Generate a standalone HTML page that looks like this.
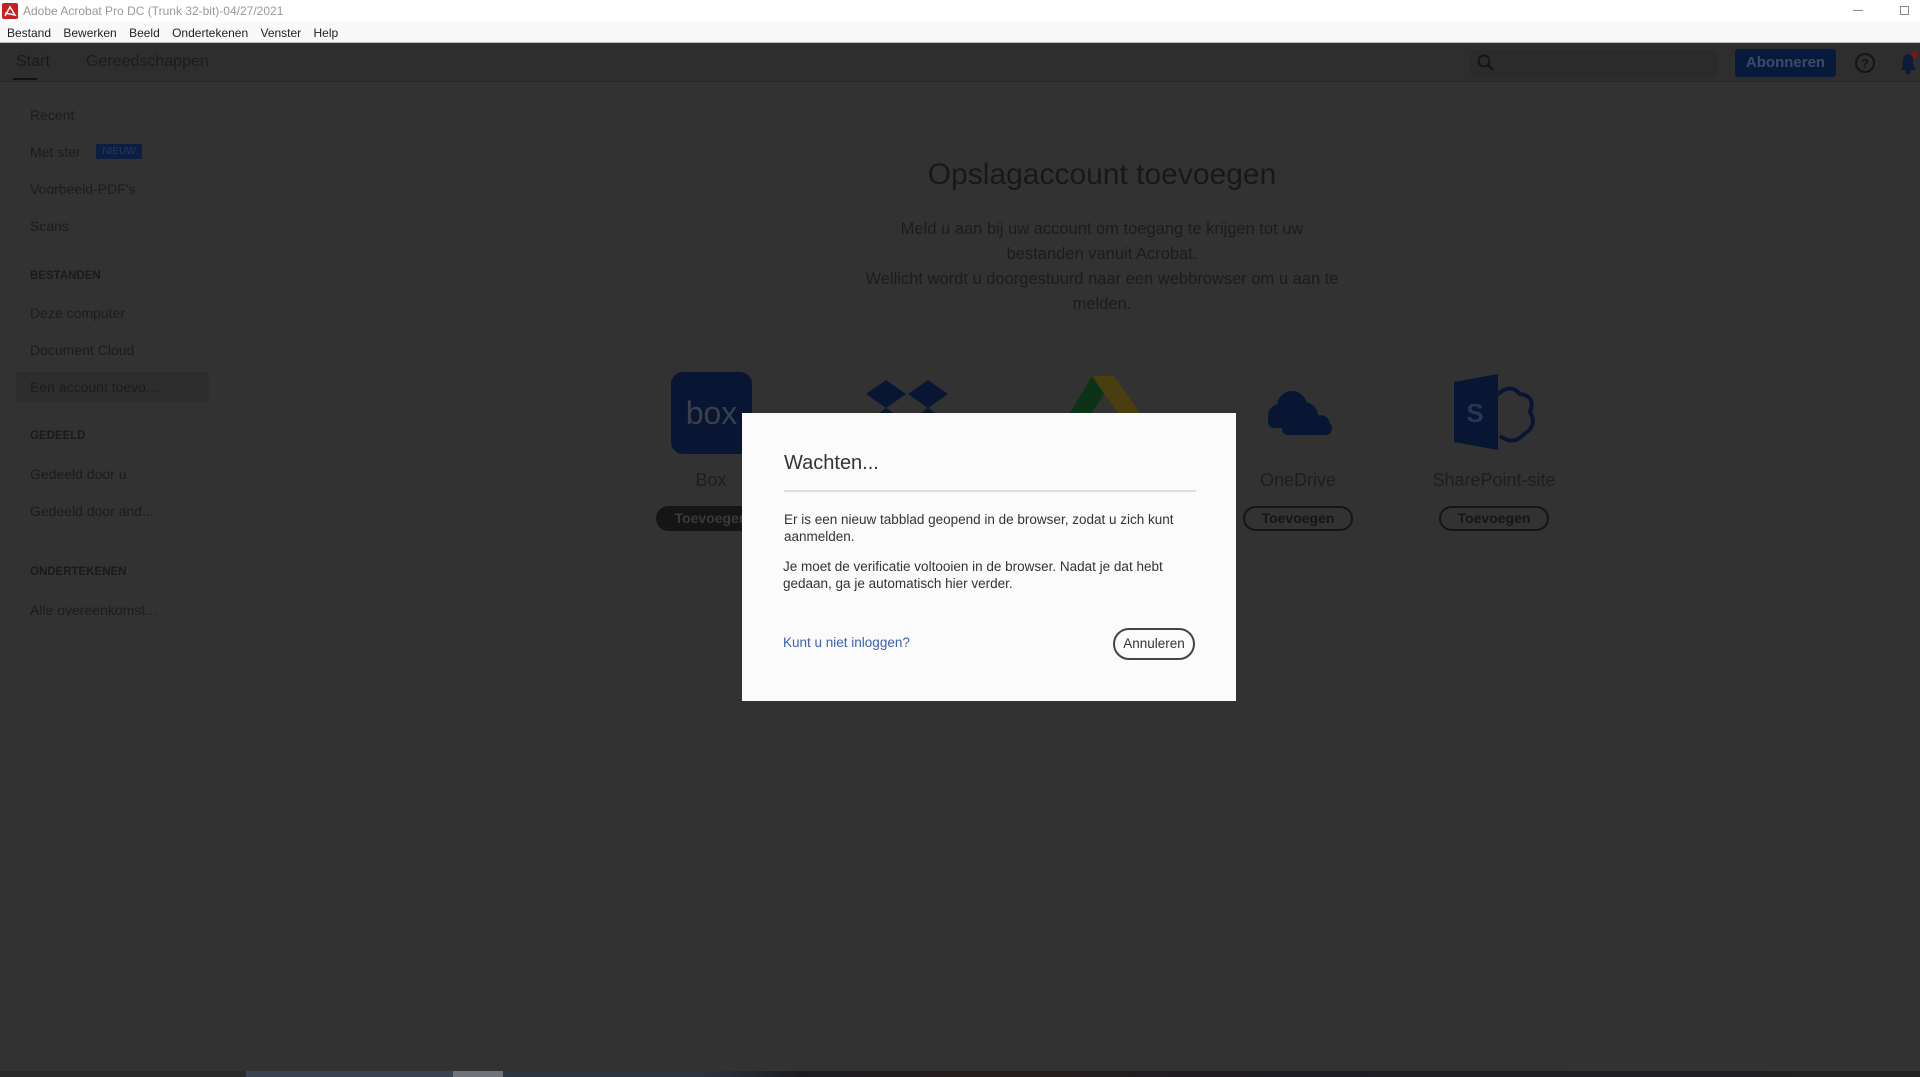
<!DOCTYPE html>
<html><head><meta charset="utf-8"><style>
*{margin:0;padding:0;box-sizing:border-box}
body{width:1920px;height:1077px;overflow:hidden;background:#323232;font-family:"Liberation Sans",sans-serif;position:relative}
.a{position:absolute;white-space:nowrap}
.side{font-size:14px;color:#1c1c1c;left:30px}
.hd{font-size:11.5px;font-weight:bold;color:#1a1a1a;left:30px}
.lbl{font-size:18px;color:#1e1e1e;text-align:center;width:200px}
.btn{border:2px solid #151515;border-radius:13px;height:25px;width:110px;font-size:14px;font-weight:bold;color:#151515;text-align:center;line-height:21px}
</style></head><body>
<div class="a" style="left:0;top:0;width:1920px;height:22px;background:#fff"></div>
<svg class="a" style="left:2px;top:3px" width="16" height="16"><rect width="16" height="16" rx="2" fill="#c8201e"/><path d="M3 13 L8 4 L13 12 L3 10" stroke="#fff" stroke-width="1.5" fill="none"/></svg>
<div class="a" style="left:23px;top:4px;font-size:12px;color:#999">Adobe Acrobat Pro DC (Trunk 32-bit)-04/27/2021</div>
<div class="a" style="left:1853px;top:10px;width:10px;height:1px;background:#888"></div>
<div class="a" style="left:1900px;top:6px;width:9px;height:9px;border:1px solid #888"></div>
<div class="a" style="left:0;top:22px;width:1920px;height:21px;background:#f9f9f9;border-bottom:1px solid #bbb"></div>
<div class="a" style="left:7px;top:26px;font-size:12px;color:#222;word-spacing:9px">Bestand Bewerken Beeld Ondertekenen Venster Help</div>
<div class="a" style="left:0;top:44px;width:1920px;height:38px;background:#2e2e2e;border-bottom:1px solid #282828"></div>
<div class="a" style="left:16px;top:53px;font-size:16px;color:#1a1a1a">Start</div>
<div class="a" style="left:13px;top:78px;width:24px;height:2px;background:#111"></div>
<div class="a" style="left:86px;top:53px;font-size:16px;color:#1c1c1c">Gereedschappen</div>
<div class="a" style="left:1471px;top:50px;width:246px;height:27px;background:#2b2b2b;border-radius:3px;border:1px solid #2a2a2a"></div>
<svg class="a" style="left:1476px;top:53px" width="20" height="20"><circle cx="8" cy="8" r="5.5" stroke="#151515" stroke-width="2" fill="none"/><path d="M12 12 L17 17" stroke="#151515" stroke-width="2.5"/></svg>
<div class="a" style="left:1735px;top:49px;width:101px;height:28px;background:#081a3c;border-radius:3px;color:#3c4a66;font-weight:bold;font-size:15px;text-align:center;line-height:28px">Abonneren</div>
<svg class="a" style="left:1854px;top:52px" width="22" height="22"><circle cx="11" cy="11" r="9" stroke="#151515" stroke-width="2" fill="none"/><text x="11" y="16" font-size="13" font-weight="bold" text-anchor="middle" fill="#151515" font-family="Liberation Sans">?</text></svg>
<svg class="a" style="left:1897px;top:50px" width="23" height="26"><path d="M4 20 Q6 17 6 11 Q6 5 11 4 Q16 5 16 11 Q16 17 19 20 Z" fill="#0a1a3a"/><circle cx="11" cy="22" r="2.5" fill="#0a1a3a"/><circle cx="18" cy="5" r="3" fill="#8a1010"/></svg>

<div class="a side" style="top:107px">Recent</div>
<div class="a side" style="top:144px">Met ster</div>
<div class="a" style="left:96px;top:144px;width:46px;height:15px;background:#0b1e44;color:#2a3a5a;font-size:10px;text-align:center;line-height:15px">NIEUW</div>
<div class="a side" style="top:181px">Voorbeeld-PDF's</div>
<div class="a side" style="top:218px">Scans</div>
<div class="a hd" style="top:270px">BESTANDEN</div>
<div class="a side" style="top:305px">Deze computer</div>
<div class="a side" style="top:342px">Document Cloud</div>
<div class="a" style="left:16px;top:372px;width:193px;height:30px;background:#2d2d2d"></div>
<div class="a side" style="top:379px">Een account toevo...</div>
<div class="a hd" style="top:430px">GEDEELD</div>
<div class="a side" style="top:466px">Gedeeld door u</div>
<div class="a side" style="top:503px">Gedeeld door and...</div>
<div class="a hd" style="top:566px">ONDERTEKENEN</div>
<div class="a side" style="top:602px">Alle overeenkomst...</div>

<div class="a" style="left:802px;top:158px;width:600px;text-align:center;font-size:30px;color:#181818">Opslagaccount toevoegen</div>
<div class="a" style="left:802px;top:217px;width:600px;text-align:center;font-size:16.5px;line-height:25px;color:#1c1c1c;white-space:normal">Meld u aan bij uw account om toegang te krijgen tot uw<br>bestanden vanuit Acrobat.<br>Wellicht wordt u doorgestuurd naar een webbrowser om u aan te<br>melden.</div>

<div class="a" style="left:671px;top:372px;width:81px;height:82px;background:#091633;border-radius:12px;color:#3a3f4a;font-size:32px;text-align:center;line-height:82px">box</div>
<svg class="a" style="left:866px;top:376px" width="84" height="80"><g fill="#091633"><path d="M0 18 L20 4 L40 18 L20 32Z"/><path d="M42 18 L62 4 L82 18 L62 32Z"/><path d="M0 46 L20 32 L40 46 L20 60Z"/><path d="M42 46 L62 32 L82 46 L62 60Z"/></g></svg>
<svg class="a" style="left:1062px;top:376px" width="84" height="40"><path d="M30 0 L52 0 L80 40 L58 40Z" fill="#4a3d10"/><path d="M30 0 L42 18 L28 40 L6 40Z" fill="#0c3218"/></svg>
<div class="a lbl" style="left:611px;top:470px">Box</div>
<div class="a btn" style="left:656px;top:506px;background:#151515;color:#3a3a3a">Toevoegen</div>
<svg class="a" style="left:1260px;top:388px" width="76" height="50"><g fill="#091633"><circle cx="20" cy="28" r="12"/><circle cx="32" cy="18" r="15"/><rect x="8" y="28" width="30" height="12" rx="6"/><circle cx="44" cy="28" r="14"/><circle cx="60" cy="37" r="10"/><rect x="22" y="34" width="50" height="13" rx="6"/></g></svg>
<div class="a lbl" style="left:1198px;top:470px">OneDrive</div>
<div class="a btn" style="left:1243px;top:506px">Toevoegen</div>
<svg class="a" style="left:1450px;top:374px" width="90" height="80"><path d="M46 22 Q60 8 70 20 Q86 22 80 38 Q88 52 74 60 Q64 72 50 62" stroke="#091633" stroke-width="4" fill="none"/><path d="M4 8 L48 0 L48 76 L4 68Z" fill="#091633"/><text x="25" y="48" font-size="26" font-weight="bold" text-anchor="middle" fill="#2a3650" font-family="Liberation Sans">S</text></svg>
<div class="a lbl" style="left:1394px;top:470px">SharePoint-site</div>
<div class="a btn" style="left:1439px;top:506px">Toevoegen</div>

<div class="a" style="left:742px;top:413px;width:494px;height:288px;background:#fbfbfb"></div>
<div class="a" style="left:784px;top:452px;font-size:20px;color:#333">Wachten...</div>
<div class="a" style="left:784px;top:490px;width:412px;height:2px;background:#ddd"></div>
<div class="a" style="left:784px;top:511px;font-size:13.5px;line-height:17px;color:#333">Er is een nieuw tabblad geopend in de browser, zodat u zich kunt<br>aanmelden.</div>
<div class="a" style="left:783px;top:558px;font-size:13.5px;line-height:17px;color:#333">Je moet de verificatie voltooien in de browser. Nadat je dat hebt<br>gedaan, ga je automatisch hier verder.</div>
<div class="a" style="left:783px;top:635px;font-size:13.5px;color:#3a62b5">Kunt u niet inloggen?</div>
<div class="a" style="left:1113px;top:628px;width:82px;height:32px;border:2px solid #444;border-radius:16px;font-size:13.5px;color:#333;text-align:center;line-height:28px">Annuleren</div>

<div class="a" style="left:0;top:1071px;width:1920px;height:6px;background:linear-gradient(90deg,#2a2a2a 0,#2a2a2a 246px,#3a4250 246px,#3a4250 453px,#707478 453px,#707478 503px,#2c3440 503px,#2c3440 700px,#1c1c20 800px,#241c1c 1000px,#1c1c22 1300px,#222 1920px)"></div>
</body></html>
